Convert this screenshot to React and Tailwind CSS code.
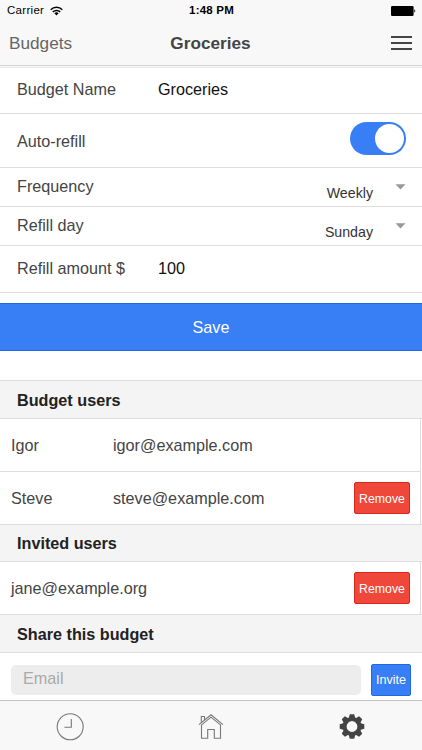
import { useState } from 'react';

const StatusBar = () => (
  <div className="grid grid-cols-3 items-center h-[21px] pt-px pl-[7px] pr-1.5 text-black">
    <div className="flex items-center gap-[6px]">
      <span className="text-[11.5px] leading-none tracking-[0.3px]">Carrier</span>
      <svg width="13" height="10" viewBox="0 0 13 10" fill="none" stroke="black" strokeWidth="1.5">
        <path d="M0.7 3.7a8.3 8.3 0 0 1 11.6 0" />
        <path d="M2.8 5.9a5.3 5.3 0 0 1 7.4 0" />
        <path d="M6.5 9.4 4.4 7.3a3 3 0 0 1 4.2 0z" fill="black" stroke="none" />
      </svg>
    </div>
    <span className="text-center text-[11.5px] leading-none font-bold tracking-[0.2px]">1:48 PM</span>
    <svg className="justify-self-end" width="25" height="10" viewBox="0 0 25 10">
      <rect x="0" y="0" width="22.6" height="10" rx="1.2" />
      <path d="M23.3 3.3q2 1.7 0 3.4z" />
    </svg>
  </div>
);

const SelectRow = ({ label, value }) => (
  <div className="flex h-[39px] border-b border-[#dddddd] pl-[17px] pr-4">
    <span className="flex-1 pt-[7px] leading-[23px]">{label}</span>
    <span className="pt-[14px] text-[14.2px] leading-[23px] text-[#333333]">{value}</span>
    <svg className="ml-[22px] mt-4" width="11" height="6" viewBox="0 0 11 6" fill="#999999">
      <path d="M0.5 0.3h10L5.5 5.6z" />
    </svg>
  </div>
);

const Divider = ({ children, className }) => (
  <h2 className={`flex items-center border-y border-[#dddddd] bg-[#f4f4f4] pl-[17px] text-[16.2px] font-bold text-[#222222] ${className}`}>
    {children}
  </h2>
);

const RemoveButton = () => (
  <button className="h-[32px] w-[56px] rounded-[2px] border border-[#d8291c] bg-[#ef473a] pt-[2px] text-[12.3px] text-white">
    Remove
  </button>
);

const App = () => {
  const [autoRefill, setAutoRefill] = useState(true);

  return (
    <div className="flex h-[750px] w-[422px] flex-col overflow-hidden bg-white font-['Liberation_Sans',Arial,sans-serif] text-[16.2px] text-[#444444]">
      <header className="h-[68px] shrink-0 border-b border-[#e8e8e8] bg-[#f8f8f8]">
        <div className="h-[66px] border-b border-[#d4d4d4]">
          <StatusBar />
          <div className="grid h-[44px] grid-cols-3 items-center pl-[9px] pr-[10px]">
            <span className="pt-[2px] text-[17.2px] text-[#666666]">Budgets</span>
            <h1 className="pt-[2px] text-center text-[17.2px] font-bold">Groceries</h1>
            <svg className="justify-self-end" width="21" height="16" viewBox="0 0 21 16" stroke="#444444" strokeWidth="1.8">
              <path d="M0 2h21M0 8h21M0 14h21" />
            </svg>
          </div>
        </div>
      </header>

      <main className="flex-1 overflow-hidden">
        <div className="flex h-[46px] items-center border-b border-[#dddddd] pb-[2px] pl-[17px]">
          <label className="w-[141px]">Budget Name</label>
          <span className="text-[#111111]">Groceries</span>
        </div>
        <div className="flex h-[54px] items-center justify-between border-b border-[#dddddd] pl-[17px] pr-4">
          <span className="pt-px">Auto-refill</span>
          <button
            onClick={() => setAutoRefill(!autoRefill)}
            className={`mb-[5px] flex h-[33px] w-[56px] items-center rounded-full p-[2px] ${autoRefill ? 'justify-end bg-[#387ef5]' : 'bg-[#dddddd]'}`}
          >
            <span className="h-[29px] w-[29px] rounded-full bg-white" />
          </button>
        </div>
        <SelectRow label="Frequency" value="Weekly" />
        <SelectRow label="Refill day" value="Sunday" />
        <div className="flex h-[47px] items-center border-b border-[#dddddd] pb-[2px] pl-[17px]">
          <label className="w-[141px]">Refill amount $</label>
          <span className="text-[#111111]">100</span>
        </div>
        <button className="mt-[10px] block h-[48px] w-full border-y border-[#1f68e0] bg-[#387ef5] text-white">
          Save
        </button>

        <Divider className="mt-[29px] h-[39px] pt-px">Budget users</Divider>
        <div className="mr-px flex h-[53px] items-center border-r border-b border-[#dddddd] pl-[11px]">
          <span className="w-[102px]">Igor</span>
          <span>igor@example.com</span>
        </div>
        <div className="mr-px flex h-[52px] items-center border-r border-[#dddddd] pl-[11px] pr-[10px]">
          <span className="w-[102px]">Steve</span>
          <span className="flex-1">steve@example.com</span>
          <RemoveButton />
        </div>

        <Divider className="h-[38px]">Invited users</Divider>
        <div className="mr-px flex h-[52px] items-center border-r border-[#dddddd] pl-[11px] pr-[10px]">
          <span className="flex-1">jane@example.org</span>
          <RemoveButton />
        </div>

        <Divider className="h-[39px] pt-px">Share this budget</Divider>
        <div className="flex h-[47px] items-center pt-[7px] pl-[11px] pr-[11px]">
          <input
            type="email"
            placeholder="Email"
            className="h-[30px] w-[350px] rounded-[5px] bg-[#ededed] px-3 pb-[3px] placeholder:text-[#aaaaaa]"
          />
          <button className="ml-[10px] h-[32px] w-[40px] rounded-[2px] border border-[#1f68e0] bg-[#387ef5] pt-px text-[12.6px] text-white">
            Invite
          </button>
        </div>
      </main>

      <nav className="grid h-[50px] shrink-0 grid-cols-3 items-center justify-items-center border-t border-[#c4c4c4] bg-[#f8f8f8] pt-[2px]">
        <svg width="28" height="28" viewBox="0 0 28 28" fill="none" stroke="#777777" strokeWidth="1.1">
          <circle cx="14.2" cy="13.8" r="13" />
          <path d="M15.3 6v8.3H8.4" />
        </svg>
        <svg width="28" height="28" viewBox="0 0 28 28" fill="none" stroke="#777777" strokeWidth="1.1">
          <path d="M2 11.6 14 1.8l12 9.8M4.5 11.9v13.3h6.2v-8.7h6.6v8.7h6.2V11.9L14 4.1z" />
          <path d="M4.3 9.7V3.5h3.2v3.5" />
        </svg>
        <svg width="26" height="26" viewBox="-13 -12.5 26 26" fill="#444444">
          <g>
            {[0, 45, 90, 135, 180, 225, 270, 315].map((angle) => (
              <path key={angle} d="M-3.4-8-2.2-12.3h4.4L3.4-8z" transform={`rotate(${angle})`} />
            ))}
          </g>
          <circle r="7.4" fill="none" stroke="#444444" strokeWidth="4" />
        </svg>
      </nav>
    </div>
  );
};

export default App;
